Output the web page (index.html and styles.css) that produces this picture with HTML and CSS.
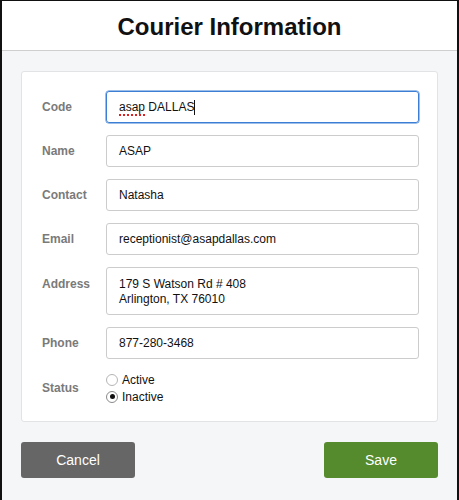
FILE: index.html
```html
<!DOCTYPE html>
<html>
<head>
<meta charset="utf-8">
<link rel="stylesheet" href="styles.css">
</head>
<body>
<div class="window">
  <header class="header"><h1 class="title">Courier Information</h1></header>
  <main class="content">
    <form class="card">
      <div class="row"><label class="label">Code</label><div class="field focus"><span class="spell">asap</span>&nbsp;DALLAS<span class="caret"></span></div></div>
      <div class="row"><label class="label">Name</label><div class="field">ASAP</div></div>
      <div class="row"><label class="label">Contact</label><div class="field">Natasha</div></div>
      <div class="row"><label class="label">Email</label><div class="field">receptionist@asapdallas.com</div></div>
      <div class="row top"><label class="label">Address</label><div class="field area">179 S Watson Rd # 408<br>Arlington, TX 76010</div></div>
      <div class="row"><label class="label">Phone</label><div class="field">877-280-3468</div></div>
      <div class="row status"><label class="label">Status</label>
        <div class="radios">
          <div class="radio"><span class="dot"></span>Active</div>
          <div class="radio"><span class="dot on"></span>Inactive</div>
        </div>
      </div>
    </form>
    <div class="actions">
      <button type="button" class="btn cancel">Cancel</button>
      <button type="button" class="btn save">Save</button>
    </div>
  </main>
</div>
</body>
</html>
```
FILE: styles.css
```css
* { box-sizing: border-box; }
html, body { margin: 0; padding: 0; }
body { font-family: "Liberation Sans", Arial, sans-serif; background: #fff; }
.window {
  width: 459px; height: 500px;
  border-left: 2px solid #111; border-right: 2px solid #111; border-top: 1px solid #111;
  background: #f5f6f8;
  display: flex; flex-direction: column;
}
.header {
  height: 50px; background: #fff; border-bottom: 1px solid #cfcfcf;
  display: flex; align-items: center; justify-content: center;
}
.title { margin: 0; font-size: 24px; font-weight: bold; color: #111; padding-top: 2px; }
.content { padding: 20px 19px 0 19px; }
.card {
  background: #fff; border: 1px solid #e2e3e5; border-radius: 3px;
  padding: 19px 18px 17px 20px;
  display: flex; flex-direction: column; gap: 12px;
}
.row { display: flex; align-items: center; }
.row.top { align-items: flex-start; }
.label { width: 64px; flex: none; font-size: 12px; font-weight: bold; color: #7a7a7a; }
.row.top .label { padding-top: 10px; }
.field {
  flex: 1; height: 32px; border: 1px solid #cccccc; border-radius: 3px;
  font-size: 12px; color: #111; padding: 0 12px;
  display: flex; align-items: center;
}
.field.focus { border-color: #3b7fd4; box-shadow: 0 0 0 0.5px #3b7fd4; }
.spell { text-decoration: underline dotted #e02020; text-decoration-thickness: 2px; text-underline-offset: 3px; }
.caret { display: inline-block; width: 1px; height: 15px; background: #111; }
.field.area { height: 48px; display: block; padding-top: 9px; line-height: 15px; }
.row.status { margin-top: 1px; }
.radios { display: flex; flex-direction: column; gap: 2px; }
.radio { display: flex; align-items: center; font-size: 12px; color: #111; height: 15px; }
.dot {
  width: 12px; height: 12px; border-radius: 50%; border: 1px solid #b5b5b5; background: #fff;
  margin-right: 4px; position: relative;
}
.dot.on { border-color: #8a8a8a; }
.dot.on::after {
  content: ""; position: absolute; left: 2.5px; top: 2.5px; width: 5px; height: 5px; border-radius: 50%; background: #111;
}
.actions { display: flex; justify-content: space-between; margin-top: 20px; }
.btn {
  width: 114px; height: 36px; border: none; border-radius: 3px; color: #fff;
  font-family: "Liberation Sans", Arial, sans-serif; font-size: 14px;
}
.cancel { background: #666666; }
.save { background: #558b2d; }
```
